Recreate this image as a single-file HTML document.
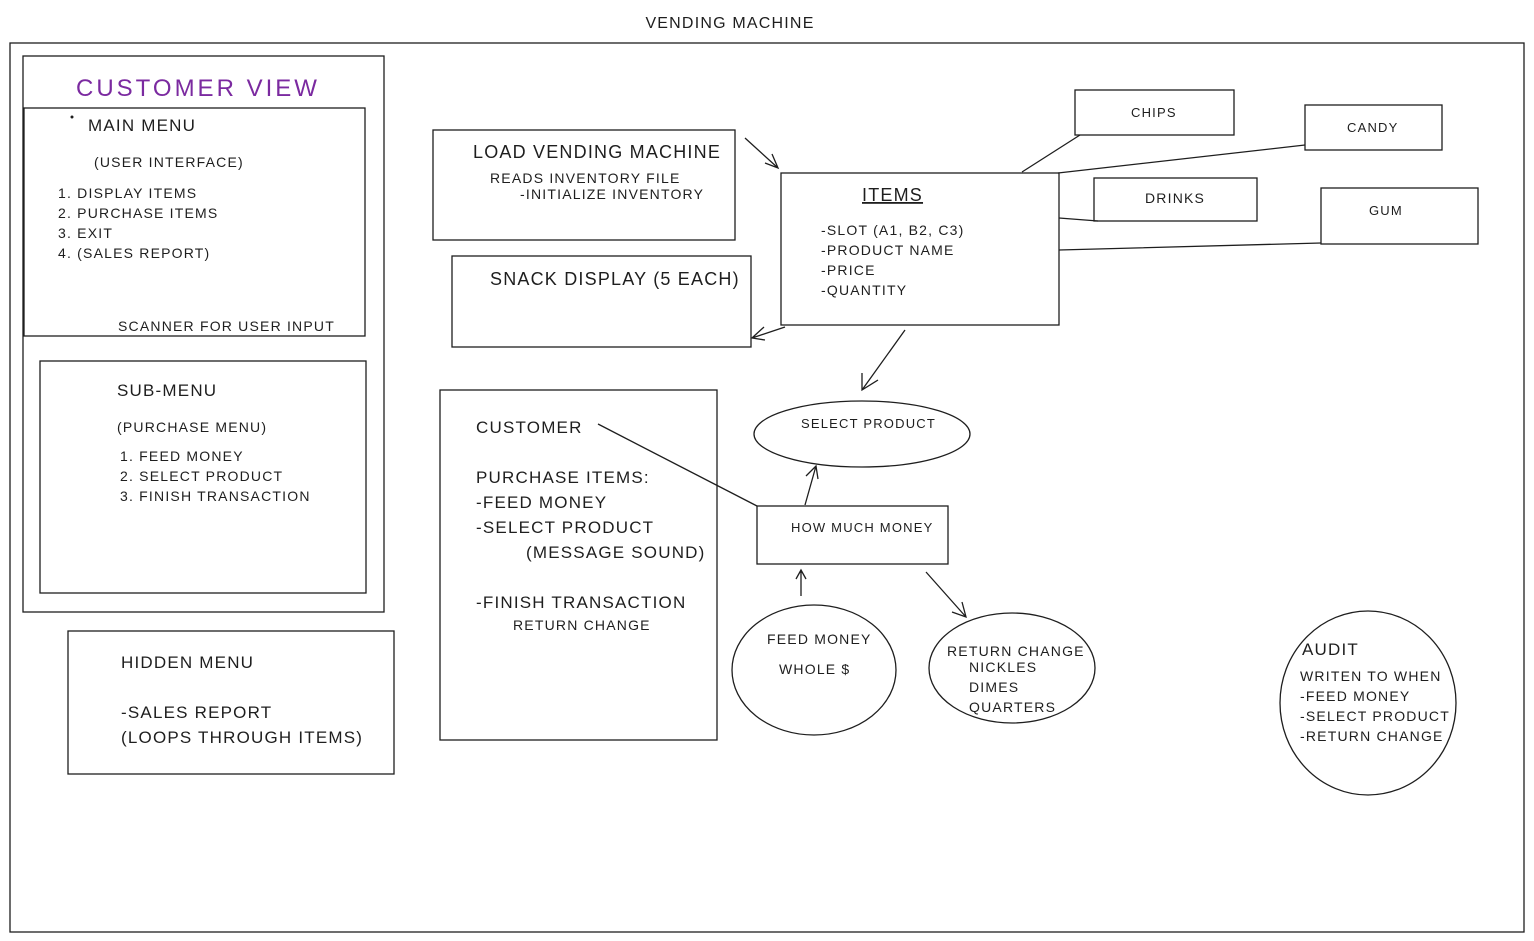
<!DOCTYPE html>
<html><head><meta charset="utf-8"><style>
html,body{margin:0;padding:0;background:#fff;}
svg{display:block;}
text{font-family:"Liberation Sans",sans-serif;fill:#1e1e1e;letter-spacing:1.2px;}
</style></head><body>
<svg width="1534" height="941" viewBox="0 0 1534 941" xmlns="http://www.w3.org/2000/svg">
<g fill="none" stroke="#1e1e1e" stroke-width="1.3">
<rect x="10" y="43" width="1514" height="889"/>
<rect x="23" y="56" width="361" height="556"/>
<rect x="24" y="108" width="341" height="228"/>
<rect x="40" y="361" width="326" height="232"/>
<rect x="68" y="631" width="326" height="143"/>
<rect x="433" y="130" width="302" height="110"/>
<rect x="452" y="256" width="299" height="91"/>
<rect x="781" y="173" width="278" height="152"/>
<rect x="1075" y="90" width="159" height="45"/>
<rect x="1305" y="105" width="137" height="45"/>
<rect x="1094" y="178" width="163" height="43"/>
<rect x="1321" y="188" width="157" height="56"/>
<rect x="440" y="390" width="277" height="350"/>
<rect x="757" y="506" width="191" height="58"/>
<ellipse cx="862" cy="434" rx="108" ry="33"/>
<ellipse cx="814" cy="670" rx="82" ry="65"/>
<ellipse cx="1012" cy="668" rx="83" ry="55"/>
<ellipse cx="1368" cy="703" rx="88" ry="92"/>
<path d="M1022 172 L1080 135 M1058 173 L1305 145 M1059 218 L1098 221 M1059 250 L1321 243"/>
<path d="M745 138 L778 168 M765 163 L778 168 L772 154"/>
<path d="M785 327 L752 338 M764 327 L752 338 L765 340"/>
<path d="M905 330 L862 390 M862 373 L862 390 L878 380"/>
<path d="M598 424 L757 506"/>
<path d="M805 505 L816 466 M806 476 L816 466 L818 479"/>
<path d="M801 596 L801 570 M796 579 L801 570 L806 579"/>
<path d="M926 572 L966 617 M952 612 L966 617 L962 602"/>
</g>
<circle cx="72" cy="117" r="1.5" fill="#1e1e1e"/>
<text x="730" y="28" font-size="16" text-anchor="middle">VENDING MACHINE</text>
<text x="76" y="96" font-size="24" style="fill:#7b2aa0;letter-spacing:3px">CUSTOMER VIEW</text>
<text x="88" y="131" font-size="17">MAIN MENU</text>
<text x="94" y="167" font-size="14">(USER INTERFACE)</text>
<text x="58" y="198" font-size="14">1. DISPLAY ITEMS</text>
<text x="58" y="218" font-size="14">2. PURCHASE ITEMS</text>
<text x="58" y="238" font-size="14">3. EXIT</text>
<text x="58" y="258" font-size="14">4. (SALES REPORT)</text>
<text x="118" y="331" font-size="14">SCANNER FOR USER INPUT</text>
<text x="117" y="396" font-size="17">SUB-MENU</text>
<text x="117" y="432" font-size="14">(PURCHASE MENU)</text>
<text x="120" y="461" font-size="14">1. FEED MONEY</text>
<text x="120" y="481" font-size="14">2. SELECT PRODUCT</text>
<text x="120" y="501" font-size="14">3. FINISH TRANSACTION</text>
<text x="121" y="668" font-size="17">HIDDEN MENU</text>
<text x="121" y="718" font-size="17">-SALES REPORT</text>
<text x="121" y="743" font-size="17">(LOOPS THROUGH ITEMS)</text>
<text x="473" y="158" font-size="18">LOAD VENDING MACHINE</text>
<text x="490" y="183" font-size="14">READS INVENTORY FILE</text>
<text x="520" y="199" font-size="14">-INITIALIZE INVENTORY</text>
<text x="490" y="285" font-size="18">SNACK DISPLAY (5 EACH)</text>
<text x="862" y="201" font-size="18" text-decoration="underline">ITEMS</text>
<text x="821" y="235" font-size="14">-SLOT (A1, B2, C3)</text>
<text x="821" y="255" font-size="14">-PRODUCT NAME</text>
<text x="821" y="275" font-size="14">-PRICE</text>
<text x="821" y="295" font-size="14">-QUANTITY</text>
<text x="1131" y="117" font-size="13">CHIPS</text>
<text x="1347" y="132" font-size="13">CANDY</text>
<text x="1145" y="203" font-size="14">DRINKS</text>
<text x="1369" y="215" font-size="13">GUM</text>
<text x="476" y="433" font-size="17">CUSTOMER</text>
<text x="476" y="483" font-size="17">PURCHASE ITEMS:</text>
<text x="476" y="508" font-size="17">-FEED MONEY</text>
<text x="476" y="533" font-size="17">-SELECT PRODUCT</text>
<text x="526" y="558" font-size="17">(MESSAGE SOUND)</text>
<text x="476" y="608" font-size="17">-FINISH TRANSACTION</text>
<text x="513" y="630" font-size="14">RETURN CHANGE</text>
<text x="801" y="428" font-size="13">SELECT PRODUCT</text>
<text x="791" y="532" font-size="13">HOW MUCH MONEY</text>
<text x="767" y="644" font-size="14">FEED MONEY</text>
<text x="779" y="674" font-size="14">WHOLE $</text>
<text x="947" y="656" font-size="14">RETURN CHANGE</text>
<text x="969" y="672" font-size="14">NICKLES</text>
<text x="969" y="692" font-size="14">DIMES</text>
<text x="969" y="712" font-size="14">QUARTERS</text>
<text x="1302" y="655" font-size="17">AUDIT</text>
<text x="1300" y="681" font-size="14">WRITEN TO WHEN</text>
<text x="1300" y="701" font-size="14">-FEED MONEY</text>
<text x="1300" y="721" font-size="14">-SELECT PRODUCT</text>
<text x="1300" y="741" font-size="14">-RETURN CHANGE</text>
</svg>
</body></html>
